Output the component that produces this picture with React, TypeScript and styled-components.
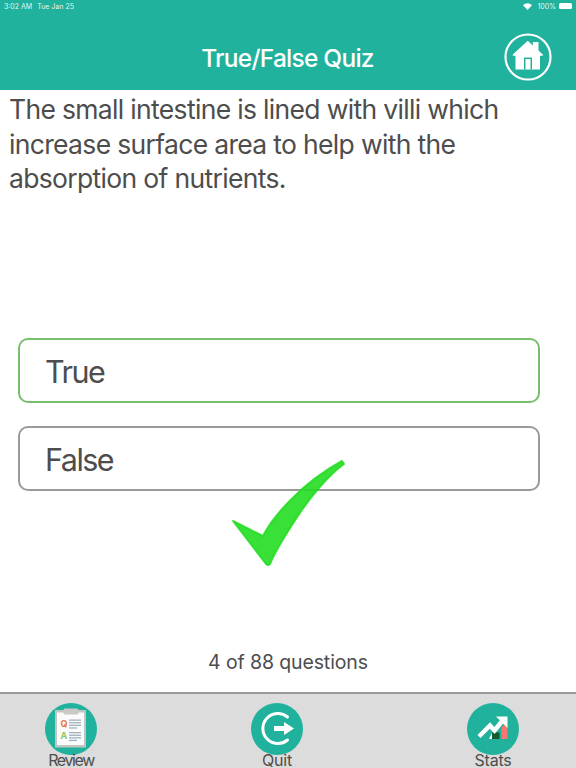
import React from "react";
import styled, { createGlobalStyle } from "styled-components";

const teal = "#20b29d";

const GlobalStyle = createGlobalStyle`
  html, body {
    margin: 0;
    padding: 0;
    background: white;
  }
  * {
    box-sizing: border-box;
  }
`;

const Page = styled.div`
  position: relative;
  width: 576px;
  height: 768px;
  display: flex;
  flex-direction: column;
  overflow: hidden;
  font-family: Inter, "Liberation Sans", sans-serif;
  color: #4d4d4d;
`;

const Header = styled.header`
  height: 90px;
  flex: none;
  background: ${teal};
  color: white;
`;

const StatusBar = styled.div`
  height: 12px;
  padding: 0 4px 0 4px;
  display: flex;
  align-items: center;
  justify-content: space-between;
  font-size: 7px;
  color: rgba(255, 255, 255, 0.9);
`;

const StatusGroup = styled.div`
  display: flex;
  align-items: center;
  gap: 5px;
`;

const Battery = styled.span`
  width: 13px;
  height: 6px;
  margin-left: -2px;
  border-radius: 1.5px;
  background: white;
`;

const TitleRow = styled.div`
  height: 78px;
  padding: 21px 24px 0 0;
  display: flex;
  align-items: flex-start;
`;

const Title = styled.h1`
  flex: 1;
  margin: 0;
  padding: 11px 0 0 71px;
  text-align: center;
  font-size: 24.5px;
  line-height: 28px;
  font-weight: 500;
  letter-spacing: -0.75px;
`;

const Main = styled.main`
  flex: 1;
  position: relative;
  display: flex;
  flex-direction: column;
`;

const Question = styled.p`
  height: 248px;
  margin: 0;
  padding: 2px 8px 0 9px;
  font-size: 26.5px;
  line-height: 34.5px;
  letter-spacing: -0.67px;
`;

const Answers = styled.div`
  display: flex;
  flex-direction: column;
  gap: 23px;
  width: 522px;
  margin-left: 18px;
`;

const Answer = styled.button<{ $correct?: boolean }>`
  height: 65px;
  padding: 2px 0 0 25px;
  display: block;
  text-align: left;
  font: inherit;
  font-size: 30.5px;
  letter-spacing: -1.5px;
  color: #4d4d4d;
  background: white;
  border: 2px solid ${(p) => (p.$correct ? "#78bf6b" : "#9a9a9a")};
  border-radius: 10px;
`;

const CheckMark = styled.svg`
  position: absolute;
  left: 230px;
  top: 368px;
`;

const Progress = styled.div`
  margin-top: 159px;
  text-align: center;
  font-size: 19.5px;
  line-height: 24px;
  letter-spacing: -0.12px;
`;

const TabBar = styled.nav`
  height: 76px;
  flex: none;
  display: grid;
  grid-template-columns: 142px 270px 162px;
  padding-top: 9px;
  background: #dcdcdc;
  border-top: 2px solid #9a9a9a;
`;

const Tab = styled.div`
  display: flex;
  flex-direction: column;
  align-items: center;
`;

const TabLabel = styled.span<{ $tight?: boolean }>`
  font-size: 16px;
  line-height: 16px;
  letter-spacing: ${(p) => (p.$tight ? "-1.4px" : "-0.2px")};
  color: #4d4d4d;
`;

const TabIcon = styled.svg`
  display: block;
  margin-bottom: -3px;
`;

const HomeIcon = () => (
  <svg width="48" height="48" viewBox="0 0 48 48">
    <circle cx="24" cy="24" r="22.5" fill="none" stroke="white" strokeWidth="2.2" />
    <path
      d="M8.8 21.5 L23.8 7.8 L28.8 12.4 V9 H34.5 V17.5 L38.8 21.5 V22.8 H36 V36.5 H11.5 V22.8 H8.8 Z"
      fill="white"
    />
    <path d="M20 36.5 V24.5 H28 V36.5 H26.5 V26 H21.5 V36.5 Z" fill={teal} />
  </svg>
);

const ReviewIcon = () => (
  <TabIcon width="52" height="52" viewBox="0 0 52 52">
    <circle cx="26" cy="26" r="26" fill={teal} />
    <rect x="10" y="7" width="31" height="37.5" fill="#c4c4c2" />
    <rect x="12" y="9.5" width="27" height="32.5" fill="#fbfbfb" />
    <rect x="18.5" y="5.5" width="15" height="6" rx="1.5" fill="#c9c9c7" />
    <text x="15.5" y="23.5" fontSize="9" fontWeight="700" fill="#e8743b" fontFamily="Inter, sans-serif">
      Q
    </text>
    <text x="15.5" y="35.5" fontSize="9" fontWeight="700" fill="#8ec75b" fontFamily="Inter, sans-serif">
      A
    </text>
    <g fill="#9fb2c0">
      <rect x="24" y="16.5" width="12" height="1.3" />
      <rect x="24" y="19.1" width="12" height="1.3" />
      <rect x="24" y="21.7" width="12" height="1.3" />
      <rect x="24" y="24.3" width="8" height="1.3" />
      <rect x="24" y="29" width="12" height="1.3" />
      <rect x="24" y="31.6" width="12" height="1.3" />
      <rect x="24" y="34.2" width="12" height="1.3" />
      <rect x="24" y="36.8" width="8" height="1.3" />
    </g>
  </TabIcon>
);

const QuitIcon = () => (
  <TabIcon width="52" height="52" viewBox="0 0 52 52">
    <circle cx="26" cy="26" r="26" fill={teal} />
    <path
      d="M36.5 14 A15 15 0 1 0 36.5 37"
      fill="none"
      stroke="white"
      strokeWidth="3"
      strokeLinecap="round"
    />
    <path d="M23 23 H33 V19 L43 25.5 L33 32 V28 H23 Z" fill="white" />
  </TabIcon>
);

const StatsIcon = () => (
  <TabIcon width="52" height="52" viewBox="0 0 52 52">
    <circle cx="26" cy="26" r="26" fill={teal} />
    <path d="M22 36 L25 30 V36 Z" fill="white" />
    <rect x="25" y="29.5" width="7.5" height="6.5" fill="#0f5c2e" />
    <path d="M34.5 36 V24.5 L37.5 21 L40.5 24.5 V36 Z" fill="#f4786e" />
    <path
      d="M12 33.5 L23 22.5 L27.5 27.5 L36 17"
      fill="none"
      stroke="white"
      strokeWidth="4.4"
    />
    <path d="M29 13.5 H40.5 V25 Z" fill="white" />
  </TabIcon>
);

const WifiIcon = () => (
  <svg width="9" height="7" viewBox="0 0 9 7">
    <path d="M0 2.2 A6.4 6.4 0 0 1 9 2.2 L4.5 7 Z" fill="white" />
  </svg>
);

export default function App() {
  return (
    <Page>
      <GlobalStyle />
      <Header>
        <StatusBar>
          <StatusGroup>
            <span>3:02 AM</span>
            <span>Tue Jan 25</span>
          </StatusGroup>
          <StatusGroup>
            <WifiIcon />
            <span>100%</span>
            <Battery />
          </StatusGroup>
        </StatusBar>
        <TitleRow>
          <Title>True/False Quiz</Title>
          <HomeIcon />
        </TitleRow>
      </Header>
      <Main>
        <Question>
          The small intestine is lined with villi which increase surface area to help with the
          absorption of nutrients.
        </Question>
        <Answers>
          <Answer $correct>True</Answer>
          <Answer>False</Answer>
        </Answers>
        <CheckMark width="116" height="110" viewBox="0 0 116 110">
          <path
            d="M3 63 L33 78 C42 60 70 26 112 3 L114 6 C100 16 80 38 62 67 C53 81 45 94 40 106 Q38 108 36 106 Z"
            fill="#22dd22"
            fillOpacity="0.9"
            stroke="#22dd22"
            strokeOpacity="0.85"
            strokeWidth="2"
            strokeLinejoin="round"
          />
        </CheckMark>
        <Progress>4 of 88 questions</Progress>
      </Main>
      <TabBar>
        <Tab>
          <ReviewIcon />
          <TabLabel $tight>Review</TabLabel>
        </Tab>
        <Tab>
          <QuitIcon />
          <TabLabel>Quit</TabLabel>
        </Tab>
        <Tab>
          <StatsIcon />
          <TabLabel>Stats</TabLabel>
        </Tab>
      </TabBar>
    </Page>
  );
}
